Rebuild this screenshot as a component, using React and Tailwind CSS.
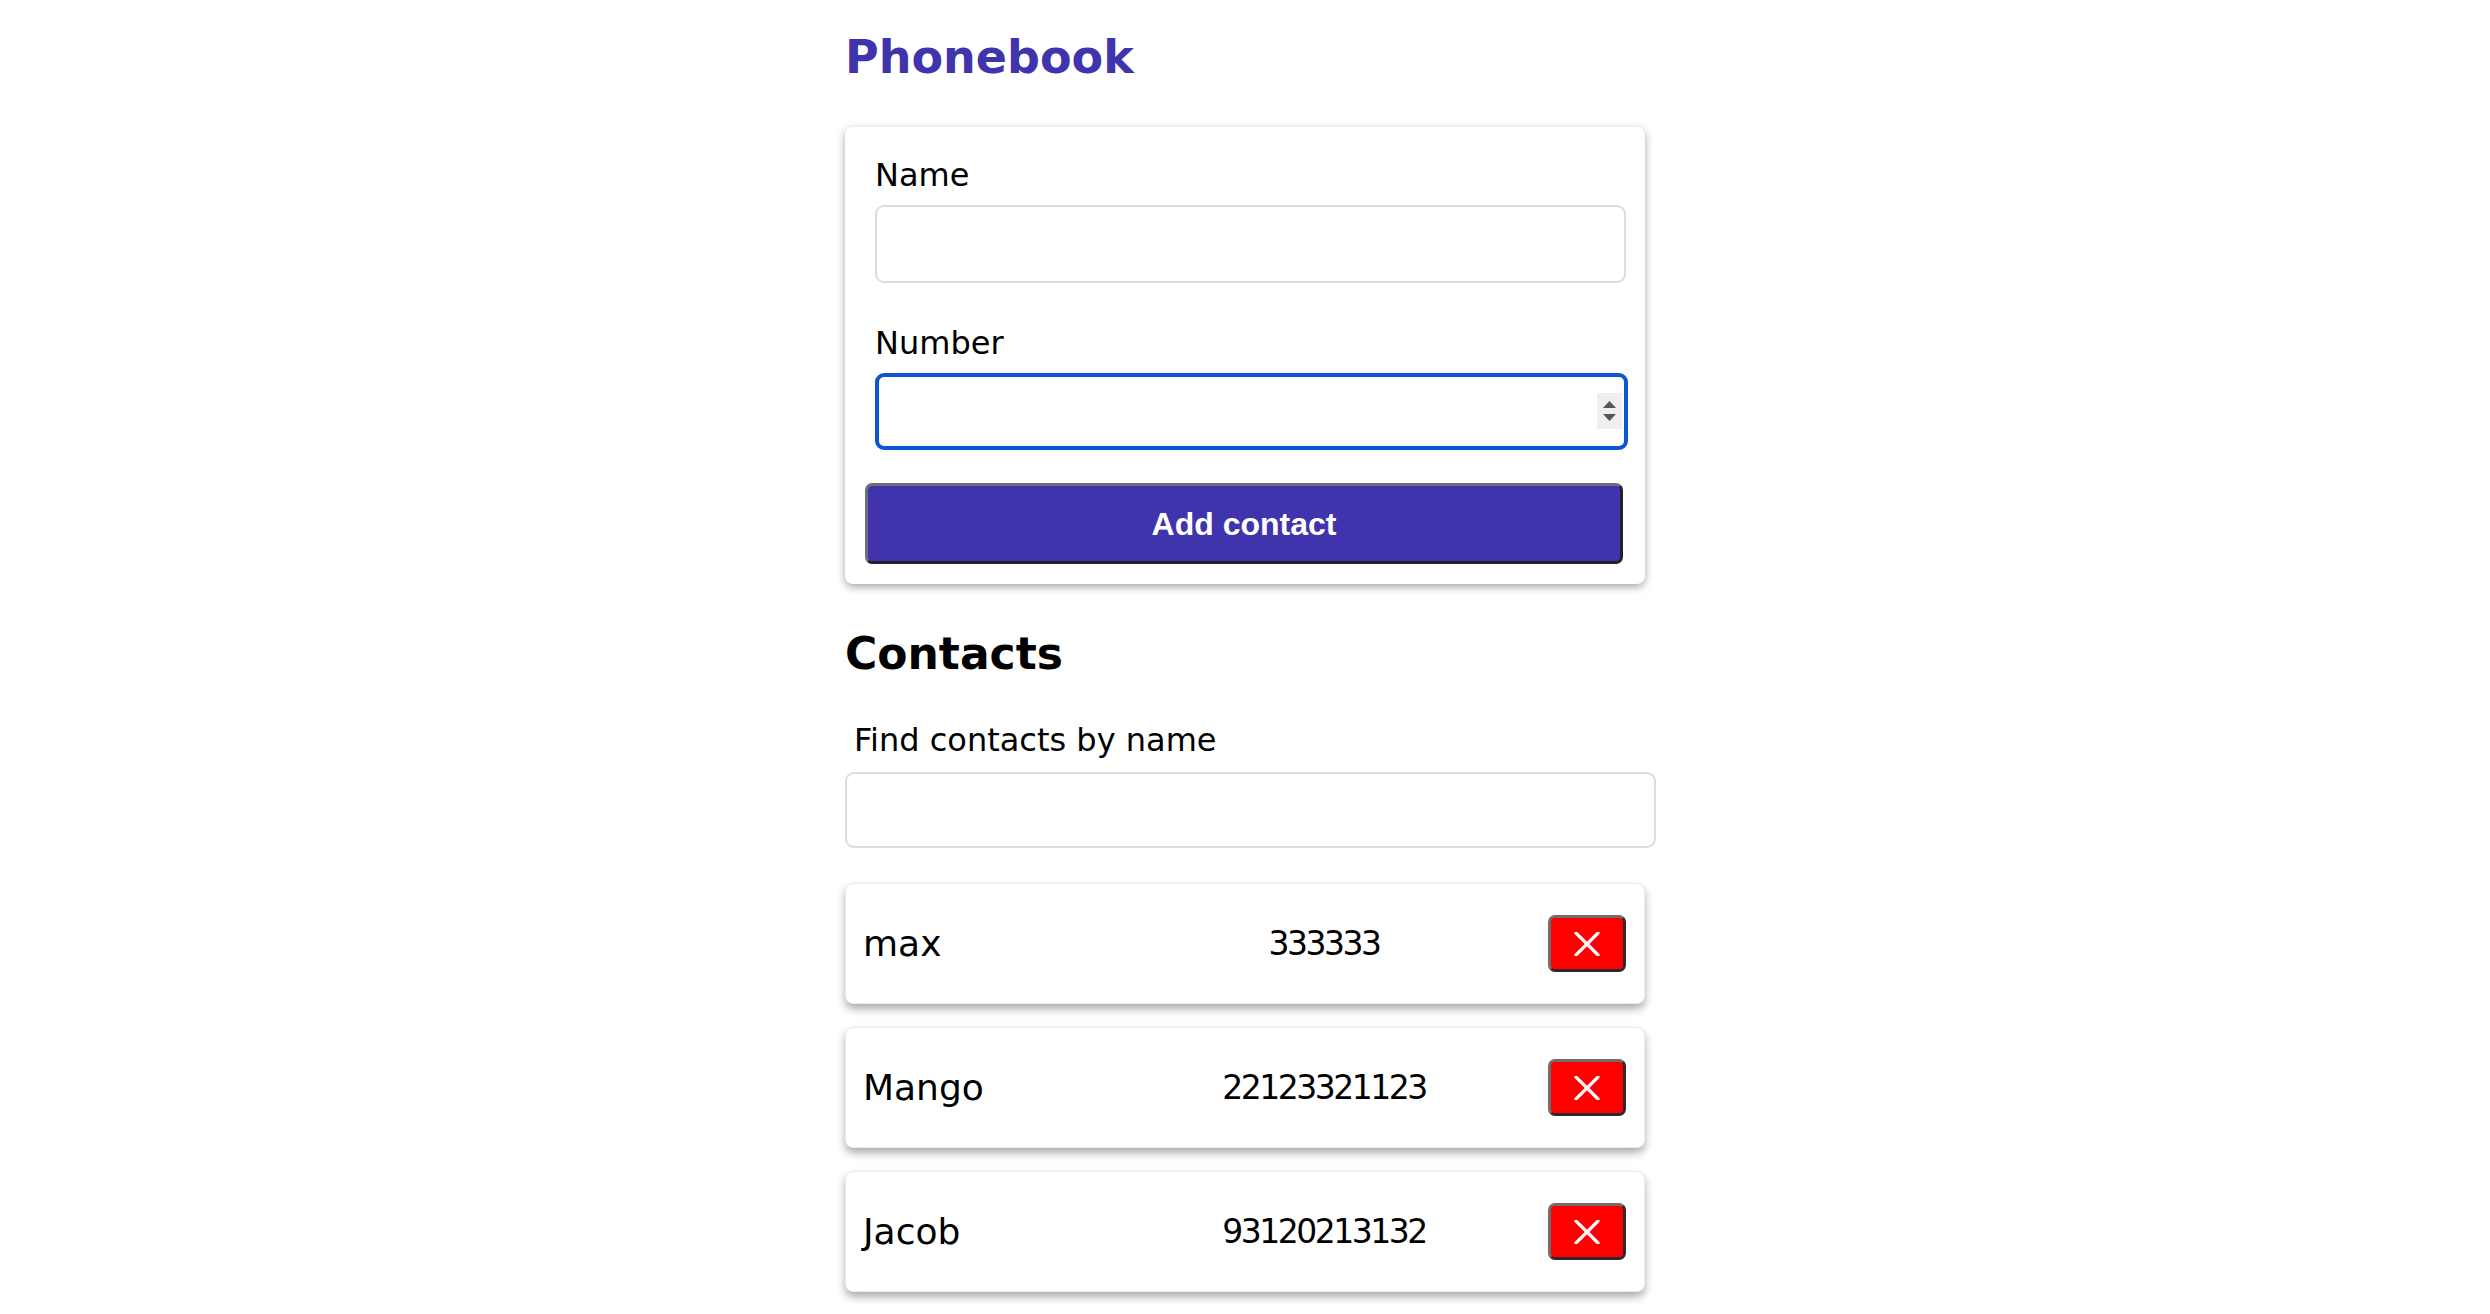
import React from "react";

const contacts = [
  { name: "max", number: "333333" },
  { name: "Mango", number: "22123321123" },
  { name: "Jacob", number: "93120213132" },
];

function XIcon() {
  return (
    <svg width="26" height="24" viewBox="0 0 26 24" fill="none">
      <path d="M2 1 L24 23 M24 1 L2 23" stroke="white" strokeWidth="3.2" strokeLinecap="round" />
    </svg>
  );
}

export default function App() {
  return (
    <div className="min-h-[1314px] bg-white text-black font-['DejaVu_Sans',sans-serif]">
      <div className="w-[800px] mx-auto pt-[34px] pb-[20px]">
        <h1 className="text-[46px] leading-none font-bold text-[#4034ad] m-0">Phonebook</h1>

        <form
          className="mt-[47px] bg-white rounded-[8px] shadow-[0_3px_9px_rgba(0,0,0,0.36)] pt-[29px] pb-[20px] pl-[20px] pr-[21px] flex flex-col"
          onSubmit={(e) => e.preventDefault()}
        >
          <label className="ml-[10px] text-[32px] leading-[38px]">Name</label>
          <input
            type="text"
            className="ml-[10px] mt-[11px] h-[78px] w-[751px] border-2 border-[#dcdcdc] rounded-[9px] px-3 text-[32px] outline-none"
          />
          <label className="ml-[10px] mt-[41px] text-[32px] leading-[38px]">Number</label>
          <div className="relative ml-[10px] mt-[11px] w-[753px] h-[77px]">
            <input
              type="text"
              className="w-full h-full border-[4px] border-[#0b57d0] rounded-[9px] px-3 text-[32px] outline-none"
            />
            <div className="absolute right-[6px] top-[20px] w-[25px] h-[36px] bg-[#efefef] flex flex-col items-center justify-center gap-[6px]">
              <svg width="13" height="7" viewBox="0 0 13 7"><path d="M6.5 0 L13 7 L0 7 Z" fill="#555" /></svg>
              <svg width="13" height="7" viewBox="0 0 13 7"><path d="M0 0 L13 0 L6.5 7 Z" fill="#555" /></svg>
            </div>
          </div>
          <button
            type="submit"
            className="mt-[33px] h-[81px] w-[758px] bg-[#4034ad] text-white text-[32px] font-bold font-['Liberation_Sans',Arial,sans-serif] rounded-[7px] border-[3px] border-t-[#6e6e78] border-l-[#6e6e78] border-b-[#222228] border-r-[#222228]"
          >
            Add contact
          </button>
        </form>

        <h2 className="mt-[48px] text-[44px] leading-none font-bold m-0">Contacts</h2>

        <label className="block mt-[45px] ml-[9px] text-[32px] leading-[38px]">Find contacts by name</label>
        <input
          type="text"
          className="block mt-[13px] h-[76px] w-[811px] border-2 border-[#dcdcdc] rounded-[9px] px-3 text-[32px] outline-none"
        />

        <ul className="mt-[35px] flex flex-col gap-[23px] list-none p-0 m-0">
          {contacts.map((c) => (
            <li
              key={c.name}
              className="h-[121px] bg-white rounded-[8px] border border-[#ececec] shadow-[0_5px_8px_rgba(0,0,0,0.32)] flex items-center pl-[17px] pr-[18px]"
            >
              <span className="flex-1 text-[36px] leading-none">{c.name}</span>
              <span className="w-[300px] text-center text-[33px] tracking-[-2.5px] leading-none">{c.number}</span>
              <button
                type="button"
                className="ml-[74px] w-[78px] h-[57px] bg-[#ff0000] rounded-[7px] border-[3px] border-t-[#6e6e6e] border-l-[#6e6e6e] border-b-[#2a2a2a] border-r-[#2a2a2a] flex items-center justify-center"
              >
                <XIcon />
              </button>
            </li>
          ))}
        </ul>
      </div>
    </div>
  );
}
